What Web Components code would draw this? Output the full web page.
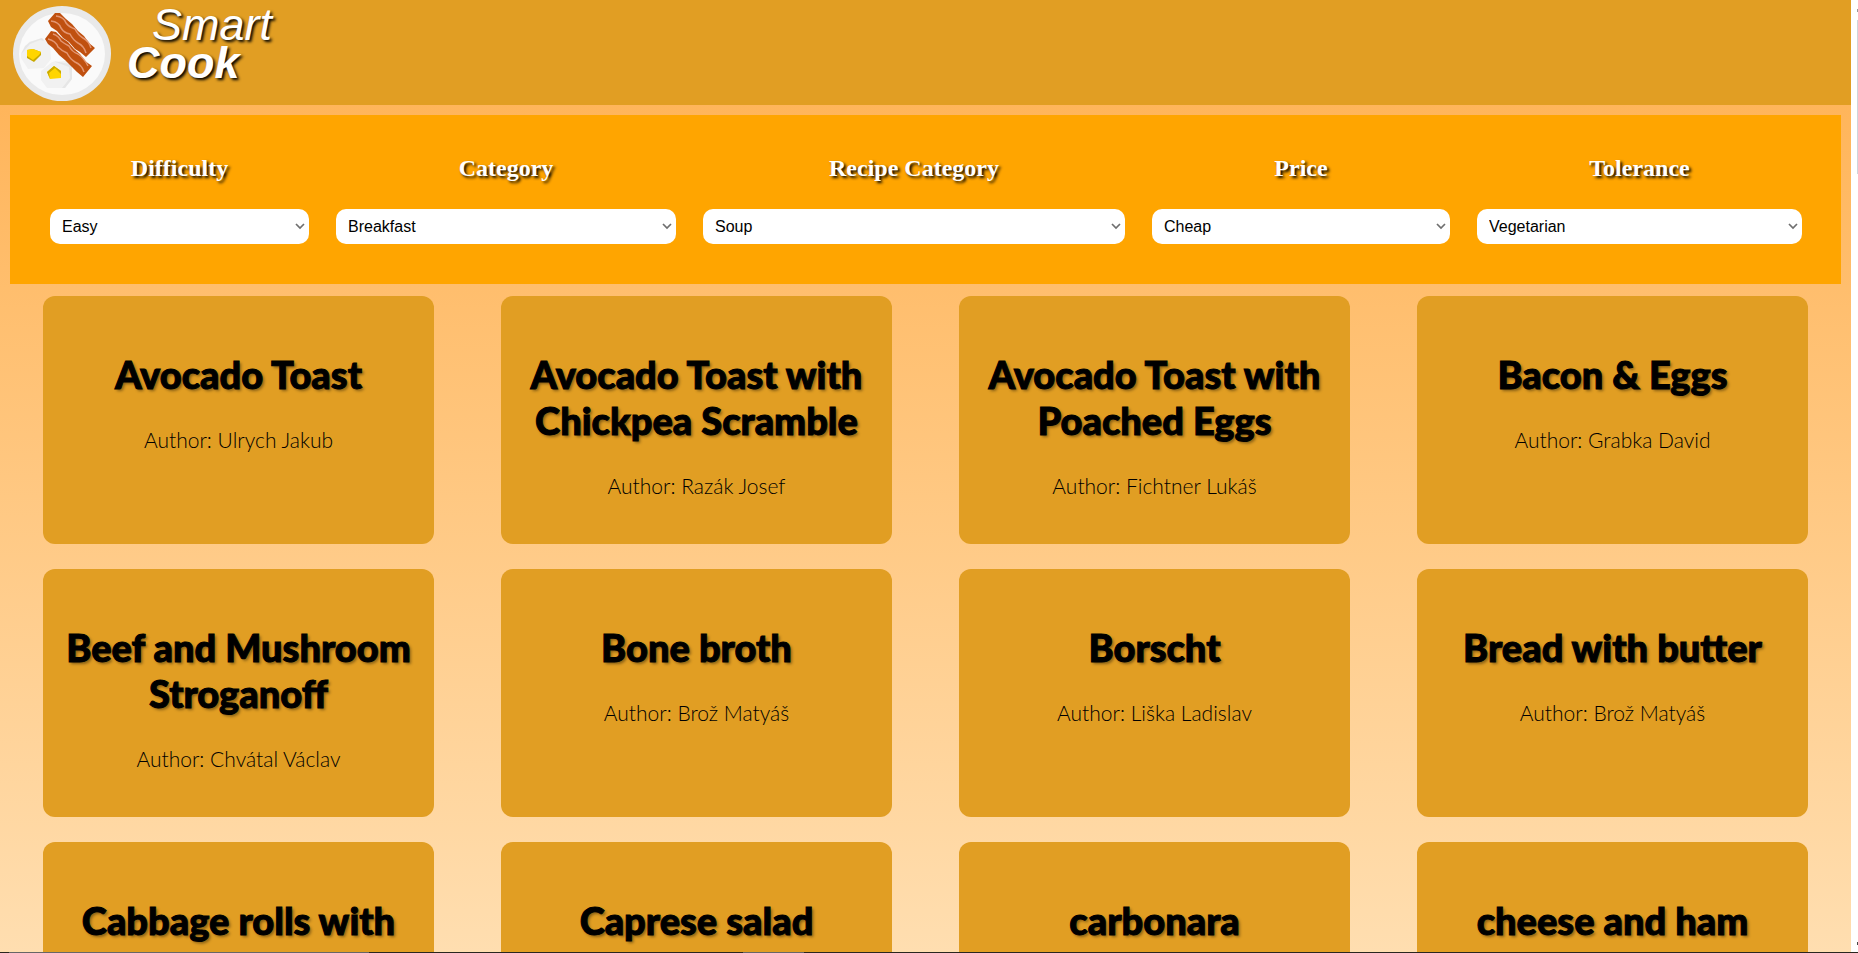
<!DOCTYPE html>
<html lang="en">
<head>
<meta charset="utf-8">
<title>Smart Cook</title>
<style>
html{height:100%;background:#fff}
body{margin:0;height:100%;overflow:hidden}
</style>
</head>
<body>
<cook-app></cook-app>
<script>
function define(name, html) {
  const tpl = document.createElement('template');
  tpl.innerHTML = html;
  customElements.define(name, class extends HTMLElement {
    constructor() {
      super();
      this.attachShadow({ mode: 'open' }).append(tpl.content.cloneNode(true));
    }
    connectedCallback() {
      const label = this.shadowRoot.querySelector('[data-label]');
      if (label) label.textContent = this.getAttribute('label');
      const option = this.shadowRoot.querySelector('option');
      if (option) option.textContent = this.getAttribute('value');
    }
  });
}

define('plate-logo', `
<style>:host{display:block;width:98px;height:95px}svg{display:block;width:100%;height:100%}</style>
<svg viewBox="0 0 98 95" preserveAspectRatio="none" role="img" aria-label="Plate with bacon and eggs">
  <ellipse cx="49" cy="47.5" rx="49" ry="47.5" fill="#e9e9e9"/>
  <ellipse cx="49" cy="48" rx="43" ry="41" fill="#fafafa"/>
  <path d="M8 48 16 36 29 32 37 39 38 53 31 62 15 63 8 52Z" fill="#f1f1f1"/>
  <path d="M8 48 12 40 17 36 29 32 31 35 27 34 17 38 11 45Z" fill="#e6e6e6"/>
  <path d="M28 65 39 56 53 55 58 60 59 73 52 82 34 82 28 74Z" fill="#f1f1f1"/>
  <path d="M40 55 57 58 59 60 59 73 52 82 49 82 57 72 56 61Z" fill="#e6e6e6"/>
  <path d="M14 44 20 43 28 46 28 49 21 56 14 52Z" fill="#c9a900"/>
  <path d="M14 44 20 43 28 46 26 49 20 54 14 50Z" fill="#ffd500"/>
  <path d="M34 66 41 60 48 65 48 72 37 73Z" fill="#ffd500"/>
  <path d="M34 66 41 60 48 65 48 68 42 62 36 67 37 73Z" fill="#c9a900"/>
  <path d="M35 15 42 7H47L53 13 59 18 65 25 71 30 76 37 82 42 73 51 67 46 62 43 56 36 50 32 44 25 38 21Z" fill="#c0500f"/>
  <path d="M32 33 38 25 43 26 49 32 55 36 61 43 67 48 72 55 79 60 70 71 64 66 59 61 52 54 46 49 40 42 35 38Z" fill="#c0500f"/>
  <g fill="none" stroke="#e39672" stroke-width="1.5" stroke-linejoin="round">
    <path d="M43 10Q51 11 53 17Q56 21 62 23Q65 29 70 32Q76 35 78 42"/>
    <path d="M38 15Q46 16 48 22Q51 27 57 28Q60 34 65 37Q71 40 73 47"/>
    <path d="M40 28Q46 30 48 35Q52 38 56 40Q59 46 65 48Q71 52 75 60"/>
    <path d="M35 33Q43 35 45 41Q49 45 54 47Q57 53 62 56Q69 59 71 66"/>
  </g>
</svg>`);

define('cook-header', `
<style>
:host{display:block;background:#e19e23}
a{display:flex;align-items:flex-start;gap:16px;height:99px;padding:6px 0 0 13px;color:#fff;text-decoration:none}
h1{margin:0;font:italic 400 45px/38px "Liberation Sans",Arial,sans-serif;text-shadow:2px 2px 3px #000}
span,strong{display:block}
span{padding-left:25px}
</style>
<header><a href="#"><plate-logo></plate-logo><h1><span>Smart</span><strong>Cook</strong></h1></a></header>`);

define('filter-select', `
<style>
:host{display:block;min-width:0}
label{display:block;margin-bottom:28px;text-align:center;color:#fff;font:700 24px/26px "Liberation Serif","Times New Roman",serif;text-shadow:2px 2px 3px #000}
.field{position:relative}
select{appearance:none;display:block;box-sizing:border-box;width:100%;height:35px;padding:0 12px;border:0;border-radius:10px;background:#fff;color:#000;font:16px "Liberation Sans",Arial,sans-serif}
svg{position:absolute;right:4px;top:14px;width:10px;height:7px;pointer-events:none}
</style>
<label for="field" data-label></label>
<div class="field"><select id="field"><option></option></select>
<svg viewBox="0 0 10 7" aria-hidden="true"><path d="M1 1 5 5 9 1" fill="none" stroke="#6f6f6f" stroke-width="1.7"/></svg></div>`);

define('filter-bar', `
<style>
:host{display:block;margin:10px 10px 0;background:orange}
form{display:grid;grid-template-columns:259fr 340fr 422fr 298fr 325fr;gap:27px;padding:40px 39px 40px 40px}
</style>
<form>
<filter-select label="Difficulty" value="Easy"></filter-select>
<filter-select label="Category" value="Breakfast"></filter-select>
<filter-select label="Recipe Category" value="Soup"></filter-select>
<filter-select label="Price" value="Cheap"></filter-select>
<filter-select label="Tolerance" value="Vegetarian"></filter-select>
</form>`);

define('recipe-card', `
<style>
:host{display:block;box-sizing:border-box;min-height:248px;padding:55px 16px 46px;border-radius:12px;background:#e19e23;text-align:center;color:#000;font-family:Lato,sans-serif}
h2{margin:0 0 31px;font-size:38px;line-height:46px;font-weight:900;-webkit-text-stroke:1px #000;text-shadow:2px 2px 3px rgba(0,0,0,.4)}
p{margin:0;font-size:21px;line-height:24px;font-weight:300}
</style>
<article><h2><slot></slot></h2><p><slot name="author"></slot></p></article>`);

define('recipe-grid', `
<style>
:host{display:grid;grid-template-columns:repeat(4,minmax(0,1fr));gap:25px 67px;padding:12px 43px 25px}
</style>
<slot></slot>`);

define('cook-app', `
<style>
:host{display:grid;grid-template-columns:minmax(0,1fr) 7px;grid-template-rows:minmax(0,1fr) 1px;height:100vh}
.page{overflow:hidden;background:linear-gradient(#ffb050,#ffdeb0)}
.rail{background:linear-gradient(#999,#999) right 9px/1px 3px no-repeat,linear-gradient(#444,#444) right bottom 7px/1px 3px no-repeat,linear-gradient(#ced6dc,#ced6dc) right 20px/1px 154px no-repeat #fff}
.edge{grid-column:1/-1;background:linear-gradient(#666,#666) 9px 0/360px 1px no-repeat,linear-gradient(#666,#666) 743px 0/61px 1px no-repeat #29261f}
</style>
<div class="page">
<cook-header></cook-header>
<main>
<filter-bar></filter-bar>
<recipe-grid>
<recipe-card>Avocado Toast<span slot="author">Author: Ulrych Jakub</span></recipe-card>
<recipe-card>Avocado Toast with Chickpea Scramble<span slot="author">Author: Razák Josef</span></recipe-card>
<recipe-card>Avocado Toast with Poached Eggs<span slot="author">Author: Fichtner Lukáš</span></recipe-card>
<recipe-card>Bacon &amp; Eggs<span slot="author">Author: Grabka David</span></recipe-card>
<recipe-card>Beef and Mushroom Stroganoff<span slot="author">Author: Chvátal Václav</span></recipe-card>
<recipe-card>Bone broth<span slot="author">Author: Brož Matyáš</span></recipe-card>
<recipe-card>Borscht<span slot="author">Author: Liška Ladislav</span></recipe-card>
<recipe-card>Bread with butter<span slot="author">Author: Brož Matyáš</span></recipe-card>
<recipe-card>Cabbage rolls with</recipe-card>
<recipe-card>Caprese salad</recipe-card>
<recipe-card>carbonara</recipe-card>
<recipe-card>cheese and ham</recipe-card>
</recipe-grid>
</main>
</div>
<div class="rail"></div>
<div class="edge"></div>`);
</script>
</body>
</html>
